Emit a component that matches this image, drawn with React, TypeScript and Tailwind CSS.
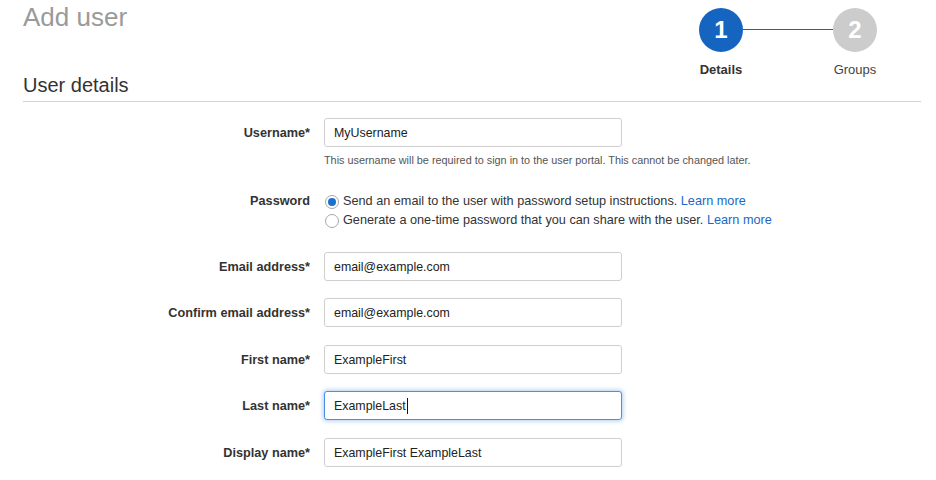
import React from "react";

const font = { fontFamily: '"Liberation Sans", Arial, sans-serif' };

const inputCls =
  "h-[29px] w-[298px] rounded-[3px] border border-[#cfcfcf] bg-white pl-[9px] pt-[1px] text-[12.4px] text-[#222] outline-none";

export default function App() {
  return (
    <div className="min-h-[480px] w-[936px] bg-white pl-[23px] pr-[15px]" style={font}>
      <header className="flex h-[102px] justify-between border-b border-[#d2d2d2]">
        <div>
          <h1 className="mt-[2px] text-[26px] leading-[30px] text-[#9a9a9a]">Add user</h1>
          <h2 className="mt-[41px] text-[20px] leading-[24px] text-[#333]">User details</h2>
        </div>
        <Stepper />
      </header>

      <form className="mt-[16px] flex flex-col">
        <Row label="Username*">
          <input readOnly defaultValue="MyUsername" className={inputCls} />
        </Row>
        <p className="ml-[301px] mt-[6px] text-[10.85px] leading-[14px] text-[#555]">
          This username will be required to sign in to the user portal. This cannot be changed later.
        </p>

        <div className="mt-[25px] flex gap-[14px]">
          <span className="w-[287px] text-right text-[12.7px] font-bold leading-[19px] text-[#333]">Password</span>
          <div className="flex flex-col text-[12.7px] leading-[19px] text-[#333]">
            <Radio checked>
              Send an email to the user with password setup instructions.{" "}
              <a className="text-[#1a67c5]">Learn more</a>
            </Radio>
            <Radio>
              Generate a one-time password that you can share with the user.{" "}
              <a className="text-[#1a67c5]">Learn more</a>
            </Radio>
          </div>
        </div>

        <Row label="Email address*" className="mt-[22px]">
          <input readOnly defaultValue="email@example.com" className={inputCls} />
        </Row>
        <Row label="Confirm email address*" className="mt-[17px]">
          <input readOnly defaultValue="email@example.com" className={inputCls} />
        </Row>
        <Row label="First name*" className="mt-[18px]">
          <input readOnly defaultValue="ExampleFirst" className={inputCls} />
        </Row>
        <Row label="Last name*" className="mt-[17px]">
          <div className="flex h-[29px] w-[298px] items-center rounded-[3px] border border-[#4a90e2] bg-white pl-[9px] pt-[1px] text-[12.4px] text-[#222] shadow-[0_0_4px_1px_rgba(74,144,226,0.45)]">
            ExampleLast
            <span className="ml-[1px] inline-block h-[16px] w-[1px] bg-[#111]" />
          </div>
        </Row>
        <Row label="Display name*" className="mt-[18px]">
          <input readOnly defaultValue="ExampleFirst ExampleLast" className={inputCls} />
        </Row>
      </form>
    </div>
  );
}

function Row({
  label,
  className = "",
  children,
}: {
  label: string;
  className?: string;
  children: React.ReactNode;
}) {
  return (
    <div className={`flex items-center gap-[14px] ${className}`}>
      <span className="w-[287px] pt-[3px] text-right text-[12.7px] font-bold text-[#333]">{label}</span>
      {children}
    </div>
  );
}

function Radio({ checked, children }: { checked?: boolean; children: React.ReactNode }) {
  return (
    <label className="flex items-center gap-[4px]">
      <span className="ml-[1px] flex h-[14px] w-[14px] items-center justify-center rounded-full border border-[#a8a8a8] bg-white">
        {checked && <span className="h-[8px] w-[8px] rounded-full bg-[#1a6fd0]" />}
      </span>
      <span>{children}</span>
    </label>
  );
}

function Stepper() {
  return (
    <div className="mr-[44px] mt-[8px] flex items-start">
      <Step n={1} label="Details" active />
      <div className="mt-[21px] h-[1px] w-[90px] bg-[#555]" />
      <Step n={2} label="Groups" />
    </div>
  );
}

function Step({ n, label, active }: { n: number; label: string; active?: boolean }) {
  return (
    <div className="flex w-[44px] flex-col items-center">
      <div
        className={`flex h-[44px] w-[44px] items-center justify-center rounded-full text-[24px] font-bold text-white ${
          active ? "bg-[#1565c0]" : "bg-[#cccccc]"
        }`}
      >
        {n}
      </div>
      <span
        className={`mt-[10px] whitespace-nowrap text-[13px] leading-[16px] ${
          active ? "font-bold text-[#333]" : "text-[#444]"
        }`}
      >
        {label}
      </span>
    </div>
  );
}
